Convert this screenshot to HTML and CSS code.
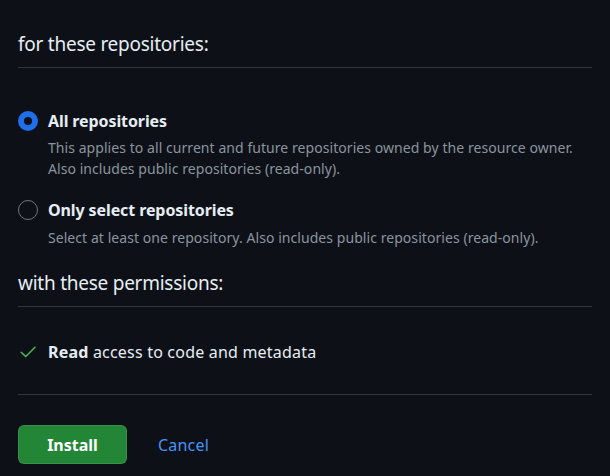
FILE: index.html
```html
<!DOCTYPE html>
<html lang="en">
<head>
<meta charset="utf-8">
<title>Install</title>
<link rel="stylesheet" href="styles.css">
</head>
<body>
<main class="page">
  <h2 class="section-title first">for these repositories:</h2>
  <div class="choices">
    <label class="choice">
      <span class="radio checked"></span>
      <span class="choice-body">
        <span class="choice-title">All repositories</span>
        <span class="choice-desc">This applies to all current and future repositories owned by the resource owner.<br>Also includes public repositories (read-only).</span>
      </span>
    </label>
    <label class="choice second">
      <span class="radio"></span>
      <span class="choice-body">
        <span class="choice-title">Only select repositories</span>
        <span class="choice-desc">Select at least one repository. Also includes public repositories (read-only).</span>
      </span>
    </label>
  </div>
  <h2 class="section-title">with these permissions:</h2>
  <ul class="perms">
    <li class="perm">
      <svg class="check" width="16" height="12" viewBox="0 0 16 12" aria-hidden="true"><polyline points="1.2,6.2 5.8,10.6 15,1.2" fill="none" stroke="#3fb950" stroke-width="1.5" stroke-linecap="round" stroke-linejoin="round"/></svg>
      <span class="perm-text"><strong>Read</strong> access to code and metadata</span>
    </li>
  </ul>
  <div class="actions">
    <button class="btn-install" type="button">Install</button>
    <a class="cancel" href="#">Cancel</a>
  </div>
</main>
</body>
</html>
```
FILE: styles.css
```css
html, body {
  margin: 0;
  padding: 0;
  background: #0d1117;
}
body {
  font-family: "Noto Sans", "Open Sans", sans-serif;
  color: #e6edf3;
}
.page {
  padding: 0 18px;
}
.section-title {
  margin: 20px 0 0;
  font-size: 19px;
  font-weight: 400;
  letter-spacing: -0.25px;
  line-height: 30px;
  padding-bottom: 8px;
  border-bottom: 1px solid #30363d;
}
.section-title.first {
  margin-top: 29px;
}
.choices {
  padding-top: 41px;
}
.choice {
  display: flex;
  align-items: flex-start;
  gap: 10px;
}
.choice.second {
  margin-top: 19px;
}
.radio {
  box-sizing: border-box;
  flex: none;
  width: 20px;
  height: 20px;
  margin-top: 2px;
  border-radius: 50%;
  border: 1px solid #6e7681;
}
.radio.checked {
  border: 6px solid #1f6feb;
}
.choice-body {
  display: flex;
  flex-direction: column;
  gap: 4px;
}
.second .choice-body {
  gap: 5px;
}
.choice-title {
  font-size: 16px;
  font-weight: 700;
  letter-spacing: -0.1px;
  line-height: 24px;
}
.choice-desc {
  font-size: 14px;
  line-height: 21px;
  letter-spacing: 0.06px;
  color: #8b949e;
}
.perms {
  list-style: none;
  margin: 0;
  padding: 33px 0 30px;
  border-bottom: 1px solid #30363d;
}
.perm {
  display: flex;
  align-items: center;
  gap: 12px;
  font-size: 16px;
  line-height: 24px;
}
.perm-text {
  letter-spacing: 0.2px;
}
.check {
  flex: none;
  margin-left: 2px;
}
.perm strong {
  font-weight: 700;
}
.actions {
  display: flex;
  align-items: center;
  gap: 31px;
  padding-top: 30px;
}
.btn-install {
  box-sizing: border-box;
  height: 39px;
  width: 109px;
  font-family: inherit;
  font-size: 16px;
  font-weight: 700;
  color: #ffffff;
  background: #238636;
  border: 1px solid rgba(240, 246, 252, 0.1);
  border-radius: 6px;
}
.cancel {
  font-size: 16px;
  letter-spacing: 0.2px;
  color: #4493f8;
  text-decoration: none;
}
```
